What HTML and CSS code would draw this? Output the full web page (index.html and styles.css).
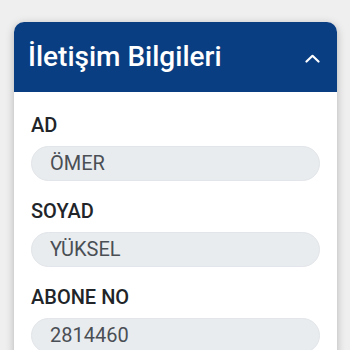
FILE: index.html
```html
<!DOCTYPE html>
<html lang="tr">
<head>
<meta charset="utf-8">
<title>İletişim Bilgileri</title>
<link rel="stylesheet" href="styles.css">
</head>
<body>
<div class="page">
    <div class="card">
        <div class="card-header">
            <h2>İletişim Bilgileri</h2>
            <svg class="chevron" width="15" height="9" viewBox="0 0 15 9">
                <path d="M1.5 7.5 L7.5 1.8 L13.5 7.5" fill="none" stroke="#fff" stroke-width="2.2" stroke-linecap="round" stroke-linejoin="round"/>
            </svg>
        </div>
        <div class="card-body">
            <div class="field">
                <label>AD</label>
                <div class="value">ÖMER</div>
            </div>
            <div class="field">
                <label>SOYAD</label>
                <div class="value">YÜKSEL</div>
            </div>
            <div class="field">
                <label>ABONE NO</label>
                <div class="value">2814460</div>
            </div>
        </div>
    </div>
</div>
</body>
</html>
```

FILE: styles.css
```css
body {
    margin: 0;
    background-color: #efefef;
    font-family: Roboto, "Noto Sans", sans-serif;
}

.page {
    padding: 22px 13px 0 14px;
}

.card {
    background-color: #fff;
    border-radius: 10px 10px 0 0;
    box-shadow: 0 2px 8px rgba(0, 0, 0, 0.25);
    overflow: hidden;
}

.card-header {
    background-color: #0a3e82;
    height: 70px;
    padding: 0 17px 0 14px;
    display: flex;
    align-items: center;
    justify-content: space-between;
}

.card-header h2 {
    margin: 0;
    color: #fff;
    font-size: 28px;
    font-weight: 500;
    padding-bottom: 1px;
}

.chevron {
    margin-top: 2px;
}

.card-body {
    padding: 20px 17px 0 17px;
}

.field {
    margin-bottom: 17px;
}

.field label {
    display: block;
    font-size: 20px;
    font-weight: 500;
    line-height: 27px;
    color: #212529;
    margin-bottom: 7px;
}

.value {
    height: 33px;
    line-height: 33px;
    padding: 0 18px;
    background-color: #e9ecef;
    border: 1px solid #e2e5e9;
    border-radius: 18px;
    font-size: 20px;
    color: #4a4f55;
}
```
